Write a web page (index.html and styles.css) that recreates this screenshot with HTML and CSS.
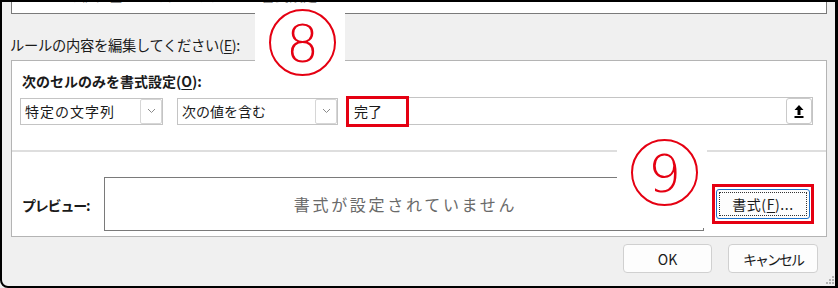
FILE: index.html
```html
<!DOCTYPE html>
<html lang="ja">
<head>
<meta charset="utf-8">
<title>書式ルールの編集</title>
<link rel="stylesheet" href="styles.css">
</head>
<body>
<div class="window">
  <div class="topbox"><span class="topbox-text">セルの値に基づいてすべてのセルを書式設定</span></div>
  <div class="edit-label">ルールの内容を編集してください(<u>E</u>):</div>
  <div class="panel">
    <div class="rule">
      <div class="rule-title">次のセルのみを書式設定(<u>O</u>):</div>
      <div class="rule-row">
        <div class="select sel1">
          <span class="select-text">特定の文字列</span>
          <span class="select-btn"><svg width="9" height="6" viewBox="0 0 9 6"><polyline points="1,1 4.5,4.5 8,1" fill="none" stroke="#8a8a8a" stroke-width="1"/></svg></span>
        </div>
        <div class="select sel2">
          <span class="select-text">次の値を含む</span>
          <span class="select-btn"><svg width="9" height="6" viewBox="0 0 9 6"><polyline points="1,1 4.5,4.5 8,1" fill="none" stroke="#8a8a8a" stroke-width="1"/></svg></span>
        </div>
        <div class="field">
          <span class="field-text">完了</span>
          <span class="field-btn"><svg width="10" height="13" viewBox="0 0 10 13"><polygon points="5,0 0.5,5 3.5,5 3.5,10 6.5,10 6.5,5 9.5,5" fill="#000"/><rect x="0.5" y="11" width="9" height="2" fill="#000"/></svg></span>
        </div>
      </div>
    </div>
    <div class="sep"></div>
    <div class="preview-row">
      <div class="preview-label">プレビュー:</div>
      <div class="preview-box">書式が設定されていません</div>
      <div class="hl-box">
        <button class="fmt-btn"><span class="focus"></span>書式(<u>F</u>)...</button>
      </div>
    </div>
  </div>
  <div class="actions">
    <button class="btn btn-ok">OK</button>
    <button class="btn btn-cancel">キャンセル</button>
  </div>

  <div class="callout callout-8"><div class="circle">8</div></div>
  <div class="callout callout-9"><div class="circle">9</div></div>
  <div class="hl-field"></div>
  <svg class="grip" width="9" height="9" viewBox="0 0 9 9">
    <rect x="7" y="1" width="2" height="2" fill="#b4b4b4"/>
    <rect x="4" y="4" width="2" height="2" fill="#b4b4b4"/>
    <rect x="7" y="4" width="2" height="2" fill="#b4b4b4"/>
    <rect x="1" y="7" width="2" height="2" fill="#b4b4b4"/>
    <rect x="4" y="7" width="2" height="2" fill="#b4b4b4"/>
    <rect x="7" y="7" width="2" height="2" fill="#b4b4b4"/>
  </svg>
</div>
</body>
</html>
```
FILE: styles.css
```css
* { box-sizing: border-box; }
html, body { margin: 0; padding: 0; }
body {
  background: #f0f0f0;
  font-family: "Noto Sans CJK JP", "Noto Sans", sans-serif;
  font-size: 14px;
  color: #1a1a1a;
}
u { text-decoration-thickness: 1px; text-underline-offset: 2px; }

.window {
  position: relative;
  width: 838px;
  height: 288px;
  border-style: solid;
  border-color: #000;
  border-width: 2px 3px 2px 2px;
  border-bottom-left-radius: 8px;
  background: #f0f0f0;
  overflow: hidden;
}

.topbox {
  margin-left: 9px;
  width: 816px;
  height: 12px;
  background: #fff;
  border: 1px solid #7a7a7a;
  border-top: none;
  overflow: hidden;
  padding-left: 27px;
}
.topbox-text {
  display: block;
  margin-top: -17px;
  line-height: 20px;
  color: #8a8a8a;
  font-size: 14px;
}

.edit-label {
  margin-top: 21px;
  margin-left: 8px;
  line-height: 20px;
  height: 20px;
  font-size: 14.3px;
  letter-spacing: -0.3px;
}

.panel {
  margin-top: 5px;
  margin-left: 9px;
  width: 816px;
  background: #fff;
  border: 1px solid #b4b4b4;
}

.rule {
  height: 89px;
  padding: 10px 0 0 8px;
}
.rule-title {
  padding-left: 2px;
  font-weight: 700;
  line-height: 20px;
  height: 20px;
}
.rule-row {
  display: flex;
  align-items: center;
  height: 28px;
  margin-top: 6px;
}
.select {
  position: relative;
  height: 27px;
  border: 1px solid #c4c4c4;
  background: #fff;
  display: flex;
  align-items: center;
  padding-left: 4px;
}
.sel1 { width: 143px; }
.sel2 { width: 161px; margin-left: 14px; }
.select-text { line-height: 20px; }
.sel1 .select-text { letter-spacing: 1px; }
.select-btn {
  position: absolute;
  right: 0;
  top: 0;
  bottom: 0;
  width: 22px;
  border: 1px solid #d6d6d6;
  border-radius: 2px;
  background: #fff;
  display: flex;
  align-items: center;
  justify-content: center;
}

.field {
  position: relative;
  width: 465px;
  height: 28px;
  margin-left: 10px;
  border: 1px solid #c4c4c4;
  background: #fff;
  display: flex;
  align-items: center;
  padding-left: 5px;
}
.field-text { line-height: 20px; }
.field-btn {
  position: absolute;
  right: 0;
  top: 0;
  bottom: 0;
  width: 26px;
  border: 1px solid #cacaca;
  border-radius: 3px;
  background: #fff;
  display: flex;
  align-items: center;
  justify-content: center;
}

.sep {
  height: 2px;
  background: #dedede;
}

.preview-row {
  display: flex;
  align-items: center;
  padding: 25px 0 5px 10px;
}
.preview-label {
  width: 82px;
  flex-shrink: 0;
  font-weight: 700;
  letter-spacing: -1.2px;
  line-height: 20px;
  padding-top: 1px;
}
.preview-box {
  width: 600px;
  height: 54px;
  border: 1px solid #7a7a7a;
  display: flex;
  align-items: center;
  justify-content: center;
  font-size: 16px;
  letter-spacing: 2.7px;
  color: #6a6a6a;
  padding-left: 3px;
}
.hl-box {
  margin-left: 8px;
  width: 102px;
  height: 40px;
  border: 3px solid #e50012;
  display: flex;
  align-items: center;
  justify-content: center;
}
.fmt-btn {
  position: relative;
  width: 94px;
  height: 30px;
  border: 1px solid #1a6fc9;
  border-radius: 3px;
  background: #fdfdfd;
  font-family: inherit;
  font-size: 14px;
  color: #1a1a1a;
  padding: 0;
  letter-spacing: 0.6px;
  line-height: 20px;
}
.focus {
  position: absolute;
  left: 2px;
  right: 2px;
  top: 2px;
  bottom: 2px;
  border: 1px dotted #333;
}

.actions {
  display: flex;
  justify-content: flex-end;
  gap: 16px;
  margin-top: 7px;
  padding-right: 17px;
}
.btn {
  height: 29px;
  border: 1px solid #d0d0d0;
  border-radius: 4px;
  background: #fdfdfd;
  font-family: inherit;
  font-size: 14px;
  color: #1a1a1a;
  padding: 0;
  line-height: 20px;
}
.btn-ok { width: 89px; }
.btn-cancel { width: 90px; font-size: 14px; letter-spacing: -2px; }

.callout {
  position: absolute;
  background: #fff;
}
.callout-8 { left: 253px; top: 1px; width: 90px; height: 58px; }
.callout-9 { left: 615px; top: 136px; width: 90px; height: 90px; }
.circle {
  position: absolute;
  left: 14px;
  top: 6px;
  width: 67px;
  height: 67px;
  border: 2px solid #e50012;
  border-radius: 50%;
  display: flex;
  align-items: center;
  justify-content: center;
  color: #e50012;
  font-family: "DejaVu Sans", sans-serif;
  font-weight: 200;
  font-size: 52px;
  line-height: 1;
  padding-top: 2px;
}
.callout-9 .circle { left: 14px; top: 1px; }

.hl-field {
  position: absolute;
  left: 344px;
  top: 94px;
  width: 63px;
  height: 31px;
  border: 3px solid #e50012;
}

.grip {
  position: absolute;
  right: 1px;
  bottom: 2px;
}
```
